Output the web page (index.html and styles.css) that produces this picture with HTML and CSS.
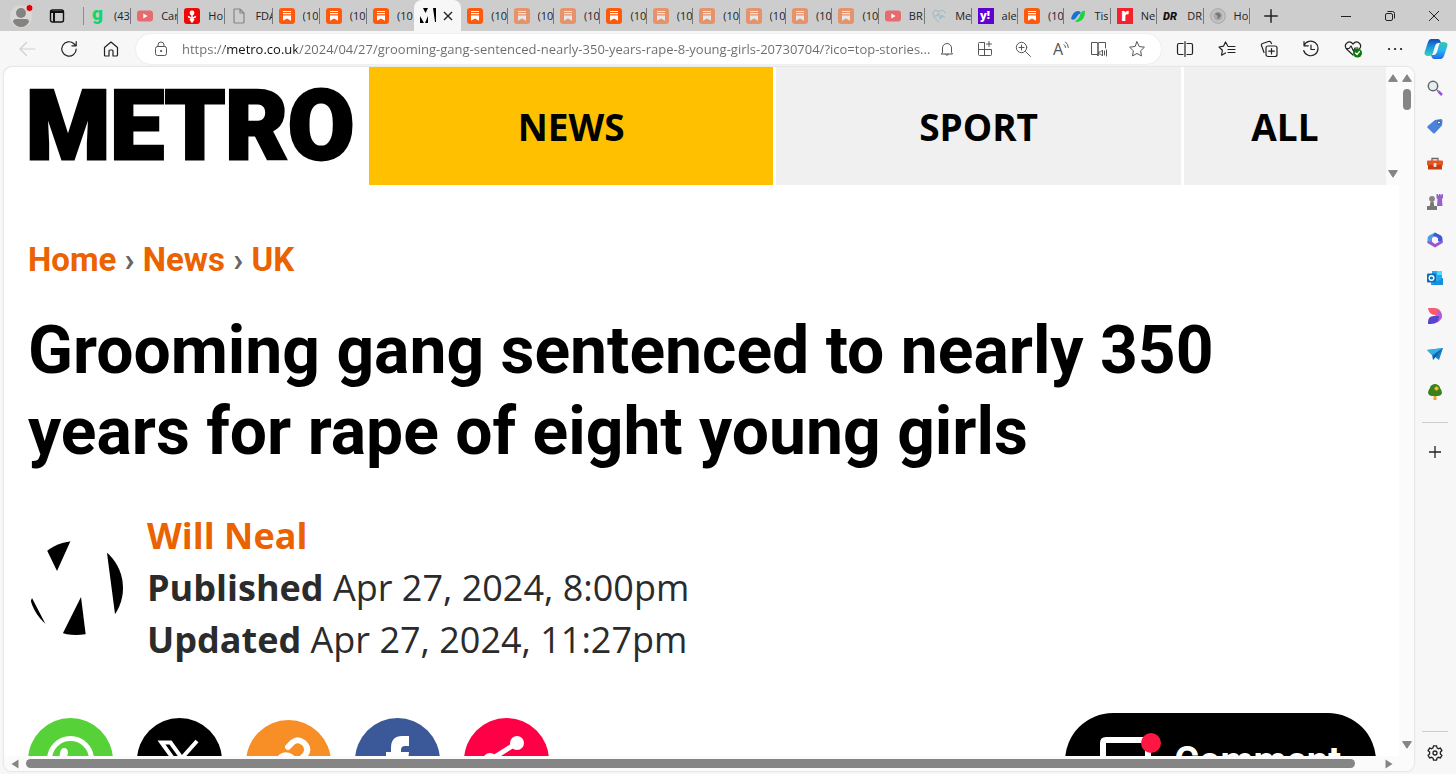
FILE: index.html
```html
<!DOCTYPE html>
<html lang="en">

<head>
  <meta charset="utf-8">
  <title>Grooming gang sentenced to nearly 350 years for rape of eight young girls</title>
  <link rel="stylesheet" href="styles.css">
</head>

<body>
  <!-- shared icons -->
  <svg class="defs" width="0" height="0">
    <symbol id="substack" viewBox="0 0 16 16">
      <rect width="16" height="16" rx="3" fill="#ff5a0c"/>
      <path d="M4 3.5h8M4 5.7h8" stroke="#fff" stroke-width="1.2"/>
      <path d="M4 7.4h8v5.4L8 10.6l-4 2.2z" fill="#fff"/>
    </symbol>
    <symbol id="youtube" viewBox="0 0 16 16">
      <rect y="2.5" width="16" height="11" rx="3" fill="#e56b6f"/>
      <path d="M6.3 5.4v5.2L10.6 8z" fill="#fff"/>
    </symbol>
    <symbol id="up" viewBox="0 0 10 8"><path d="M5 .8 9.4 7.4H.6z" fill="#858585" stroke="#858585" stroke-linejoin="round"/></symbol>
    <symbol id="down" viewBox="0 0 10 8"><path d="M5 7.2 9.4.6H.6z" fill="#858585" stroke="#858585" stroke-linejoin="round"/></symbol>
    <symbol id="plus" viewBox="0 0 16 16"><path d="M8 2v12M2 8h12" stroke="#222" stroke-width="1.3"/></symbol>
  </svg>

  <div class="browser">
    <div class="tabstrip">
      <button class="profile" aria-label="Profile">
        <svg width="26" height="24" viewBox="0 0 26 24">
          <circle cx="12" cy="12.5" r="11" fill="#dad8d6"/>
          <circle cx="12" cy="9" r="5" fill="#858381"/>
          <path d="M4 18q0-3 3-3h10q3 0 3 3-3 5-8 5t-8-5z" fill="#858381"/>
          <circle cx="20.5" cy="4" r="3.5" fill="#dc0000" stroke="#e4e4e4" stroke-width=".8"/>
        </svg>
      </button>
      <button class="tab-actions" aria-label="Tab actions">
        <svg width="16" height="16" viewBox="0 0 16 16" fill="none" stroke="#111" stroke-width="1.4">
          <rect x="1.5" y="2" width="13" height="12" rx="2"/>
          <path d="M1.5 4h13M5 5v9" stroke-width="2"/>
        </svg>
      </button>
      <div class="tabs" role="tablist">
        <button class="tab" role="tab"><svg viewBox="0 0 16 16"><text x="2" y="12" class="fav-g">g</text></svg><span>(43</span></button>
        <button class="tab" role="tab"><svg viewBox="0 0 16 16"><use href="#youtube"/></svg><span>Car</span></button>
        <button class="tab" role="tab"><svg viewBox="0 0 16 16"><rect width="16" height="16" rx="3" fill="#ee0808"/><circle cx="8" cy="5" r="2.4" fill="#fff"/><path d="M8 6v8M4 8.5l4 2 4-2M6 11l2 3 2-3" stroke="#fff" stroke-width="1.5" fill="none"/></svg><span>Ho</span></button>
        <button class="tab" role="tab"><svg viewBox="0 0 16 16" fill="none" stroke="#858585" stroke-width="1.2"><path d="M3 1h6l4 4v9q0 1-1 1H4q-1 0-1-1V2q0-1 1-1M9 1v4h4"/></svg><span>FDA</span></button>
        <button class="tab" role="tab"><svg viewBox="0 0 16 16"><use href="#substack"/></svg><span>(10</span></button>
        <button class="tab" role="tab"><svg viewBox="0 0 16 16"><use href="#substack"/></svg><span>(10</span></button>
        <button class="tab before-active" role="tab"><svg viewBox="0 0 16 16"><use href="#substack"/></svg><span>(10</span></button>
        <button class="tab active" role="tab" aria-selected="true" aria-label="Metro">
          <svg viewBox="0 0 16 16"><path d="M3 0h5L5.5 5zM0 8l4 7H0zM8 8v7H5zM13 0h3v14h-1z"/></svg>
          <svg viewBox="0 0 16 16" stroke="#222" stroke-width="1.4"><path d="M4 4l8 8M12 4l-8 8"/></svg>
        </button>
        <button class="tab" role="tab"><svg viewBox="0 0 16 16"><use href="#substack"/></svg><span>(10</span></button>
        <button class="tab asleep" role="tab"><svg viewBox="0 0 16 16"><use href="#substack"/></svg><span>(10</span></button>
        <button class="tab asleep" role="tab"><svg viewBox="0 0 16 16"><use href="#substack"/></svg><span>(10</span></button>
        <button class="tab" role="tab"><svg viewBox="0 0 16 16"><use href="#substack"/></svg><span>(10</span></button>
        <button class="tab asleep" role="tab"><svg viewBox="0 0 16 16"><use href="#substack"/></svg><span>(10</span></button>
        <button class="tab asleep" role="tab"><svg viewBox="0 0 16 16"><use href="#substack"/></svg><span>(10</span></button>
        <button class="tab asleep" role="tab"><svg viewBox="0 0 16 16"><use href="#substack"/></svg><span>(10</span></button>
        <button class="tab asleep" role="tab"><svg viewBox="0 0 16 16"><use href="#substack"/></svg><span>(10</span></button>
        <button class="tab asleep" role="tab"><svg viewBox="0 0 16 16"><use href="#substack"/></svg><span>(10</span></button>
        <button class="tab" role="tab"><svg viewBox="0 0 16 16"><use href="#youtube"/></svg><span>BR</span></button>
        <button class="tab" role="tab"><svg viewBox="0 0 16 16" fill="none" stroke="#8fb9c8"><path d="M8 14C4 11 2 8 2 5.500 2 2 6 1.500 8 4c2-2.500 6-2 6 1.500M3 8h3l1.500-3 2 6 1.500-4 1 2h2"/></svg><span>Me</span></button>
        <button class="tab" role="tab"><svg viewBox="0 0 16 16"><rect width="16" height="16" fill="#5f01d1"/><text x="2" y="11" class="fav-y">y!</text></svg><span>ale</span></button>
        <button class="tab" role="tab"><svg viewBox="0 0 16 16"><use href="#substack"/></svg><span>(10</span></button>
        <button class="tab" role="tab"><svg viewBox="0 0 16 16"><path d="M1 11Q3 3 8 3q2 0 3 2-3 1-5 5-2 3-5 1z" fill="#1673d2"/><path d="M5 13q4-2 5-6 2-5 5-4 0 8-5 10-3 2-5 0z" fill="#1ed33d"/></svg><span>Tis</span></button>
        <button class="tab" role="tab"><svg viewBox="0 0 16 16"><rect width="16" height="16" fill="#f5222d"/><text x="4" y="13" class="fav-r">r</text></svg><span>Ne</span></button>
        <button class="tab" role="tab"><svg viewBox="0 0 16 16"><text x="0" y="12" class="fav-dr">DR</text></svg><span>DR</span></button>
        <button class="tab" role="tab"><svg viewBox="0 0 16 16"><circle cx="8" cy="8" r="7.3" fill="#c4c4c4" stroke="#a4a4a4"/><circle cx="8" cy="8" r="4.5" fill="#aaa"/><path d="M5 6q4-3 6 1-1 4-4 4 2-3-2-5z" fill="#777"/></svg><span>Ho</span></button>
      </div>
      <button class="new-tab" aria-label="New tab"><svg width="18" height="18"><use href="#plus"/></svg></button>
      <div class="window-buttons">
        <button aria-label="Minimize"><svg width="12" height="12" viewBox="0 0 12 12" stroke="#222"><path d="M1 6.5h10"/></svg></button>
        <button aria-label="Restore"><svg width="12" height="12" viewBox="0 0 12 12" fill="none" stroke="#222"><rect x="1.5" y="3.5" width="7" height="7" rx="1.5"/><path d="M3.5 1.5h5q2 0 2 2v5"/></svg></button>
        <button aria-label="Close"><svg width="12" height="12" viewBox="0 0 12 12" stroke="#222"><path d="M1 1l10 10M11 1L1 11"/></svg></button>
      </div>
    </div>

    <div class="toolbar">
      <button class="tool disabled" aria-label="Back"><svg viewBox="0 0 18 18"><path d="M17 9H2M8.500 2.500L2 9l6.500 6.500"/></svg></button>
      <button class="tool" aria-label="Refresh"><svg viewBox="0 0 18 18"><path d="M16.200 9a7.200 7.200 0 1 1-2.300-5.300L16 5.600M16.200 1.500v4.300h-4.300"/></svg></button>
      <button class="tool" aria-label="Home"><svg viewBox="0 0 18 18"><path d="M2.500 7.500L9 2l6.500 5.500V15q0 1-1 1H11v-5q0-1-1-1H8q-1 0-1 1v5H3.500q-1 0-1-1z"/></svg></button>
      <div class="address">
        <svg class="lock" viewBox="0 0 18 18"><rect x="3.5" y="6.5" width="11" height="9" rx="2"/><path d="M6 6.500V5a3 3 0 0 1 6 0v1.500"/><circle cx="9" cy="11" r=".6" fill="#555"/></svg>
        <input class="url" type="text" aria-label="Address" value="https://metro.co.uk/2024/04/27/grooming-gang-sentenced-nearly-350-years-rape-8-young-girls-20730704/?ico=top-stories...">
        <button class="tool bell" aria-label="Notifications"><svg viewBox="0 0 18 18"><path d="M4.500 12.500V8a4.500 4.500 0 0 1 9 0v4.500l1 1.500h-11zM7.500 14.500q1.500 2 3 0"/></svg></button>
        <button class="tool" aria-label="Apps"><svg viewBox="0 0 18 18"><path d="M8 2.500H3.500q-1 0-1 1v11q0 1 1 1h11q1 0 1-1v-5h-13M8.500 2.500v13M13 1.500v5M10.500 4h5"/></svg></button>
        <button class="tool" aria-label="Zoom"><svg viewBox="0 0 18 18"><circle cx="7.5" cy="7.5" r="5.2"/><path d="M11.500 11.500l5 5M7.500 5v5M5 7.500h5"/></svg></button>
        <button class="tool" aria-label="Read aloud"><svg viewBox="0 0 18 18"><text x="1" y="15" class="read-a">A</text><path d="M12 4.500q1.500 1 1.500 3M13.500 2q2.800 2 2.800 5.500"/></svg></button>
        <button class="tool" aria-label="Immersive reader"><svg viewBox="0 0 18 18"><path d="M8 3.500q0-1-1-1H1.500v12H7q1 0 1 1zM8 3.500q0-1 1-1h6.500V8M8 15.500v-12M9 12h1.500l2-2v6l-2-2H9zM14.500 11v4M16.500 10v6"/></svg></button>
        <button class="tool" aria-label="Add to favorites"><svg viewBox="0 0 18 18"><path d="M9 1.800l2.200 4.700 5.200.7-3.800 3.600.9 5.100L9 13.500l-4.500 2.400.9-5.100L1.600 7.200l5.200-.7z"/></svg></button>
      </div>
      <button class="tool" aria-label="Split screen"><svg viewBox="0 0 18 18"><path d="M7 3.500H3q-1.500 0-1.500 1.500v8q0 1.500 1.500 1.500h4M11 3.500h4q1.500 0 1.500 1.500v8q0 1.500-1.500 1.500h-4M9 1.500v15"/></svg></button>
      <button class="tool" aria-label="Favorites"><svg viewBox="0 0 18 18"><path d="M9.500 5.500L7.500 2 5.500 6.200 1 7l3.400 3.200-.8 5 3.900-2.200M10 6.500h7M10 9.500h7M10 12.500h7"/></svg></button>
      <button class="tool" aria-label="Collections"><svg viewBox="0 0 18 18"><rect x="6" y="6" width="11" height="10.5" rx="2"/><path d="M11.500 8.500v5.500M8.700 11.200h5.600M4 12.500L1.500 5.500Q1 4 2.500 3.500l6-2q2-.5 2.500 1l.5 1"/></svg></button>
      <button class="tool" aria-label="History"><svg viewBox="0 0 18 18"><path d="M2 5.500a7.300 7.300 0 1 1-.3 5M2 1.500v4.300h4.300M9 5v4.500h3.500"/></svg></button>
      <button class="tool" aria-label="Browser essentials"><svg viewBox="0 0 18 18"><path d="M9 15L2.500 9C-1 4 5-.5 9 4c4-4.500 10 0 6.500 5M2 8.500h3L7 6l2.500 5L11 8h3"/><circle cx="13.5" cy="13" r="4.5" fill="#0b7a0b" stroke="none"/><path d="M11.500 13l1.500 1.500 2.500-3" stroke="#fff"/></svg></button>
      <button class="tool" aria-label="Settings and more"><svg viewBox="0 0 18 18"><path d="M3 9h.1M9 9h.1M15 9h.1" stroke-width="2.2"/></svg></button>
      <button class="copilot" aria-label="Copilot">
        <svg width="24" height="22" viewBox="0 0 24 22">
          <defs>
            <linearGradient id="cop1" x1="0" y1="0" x2="0" y2="1"><stop offset="0" stop-color="#1746bd"/><stop offset=".5" stop-color="#179de0"/><stop offset="1" stop-color="#3ed1b0"/></linearGradient>
            <linearGradient id="cop2" x1="0" y1="0" x2="0" y2="1"><stop offset="0" stop-color="#35c9a0"/><stop offset=".5" stop-color="#28b4ef"/><stop offset="1" stop-color="#1f6be8"/></linearGradient>
          </defs>
          <path d="M7 1h7q2 0 3 4h-3q-2 0-3 3L9 15q-1 3-4 3-6 0-4-5L4 4q1-3 3-3z" fill="url(#cop1)"/>
          <path d="M17 21h-7q-2 0-3-4h3q2 0 3-3l2-7q1-3 4-3 6 0 4 5l-3 9q-1 3-3 3z" fill="url(#cop2)"/>
        </svg>
      </button>
    </div>

    <div class="workspace">
      <div class="frame">
        <div class="page">
          <header class="masthead">
            <a class="logo" href="#">METRO</a>
            <nav class="nav">
              <a class="nav-item current" href="#">NEWS</a>
              <a class="nav-item" href="#">SPORT</a>
              <a class="nav-item" href="#">ALL</a>
            </nav>
            <div class="scroll-y">
              <svg width="10" height="8"><use href="#up"/></svg>
              <svg width="10" height="8"><use href="#down"/></svg>
            </div>
          </header>

          <main class="article">
            <div class="breadcrumb"><a href="#">Home</a> › <a href="#">News</a> › <a href="#">UK</a></div>
            <h1 class="headline">Grooming gang sentenced to nearly 350 years for rape of eight young girls</h1>
            <div class="byline">
              <svg class="avatar" viewBox="28 540 96 96">
                <clipPath id="round"><circle cx="76" cy="588" r="47"/></clipPath>
                <path clip-path="url(#round)" d="M42 540h29L57 571zM107 553l20-3v64h-12zM32 598L46 625l-18 5v-22zM81 597l5 40H61z"/>
              </svg>
              <div class="byline-text">
                <a class="author" href="#">Will Neal</a>
                <div><b>Published</b> Apr 27, 2024, 8:00pm</div>
                <div><b>Updated</b> Apr 27, 2024, 11:27pm</div>
              </div>
            </div>
            <div class="share">
              <button class="share-button whatsapp" aria-label="WhatsApp"><svg viewBox="0 0 85 85"><circle cx="42.5" cy="41.5" r="21" fill="none" stroke="#fff" stroke-width="5"/><path d="M36 30q4 0 4 5l-1 4q3 7 10 9 8 2 5 6-6 5-15-3T32 35q1-5 4-5z" fill="#fff"/></svg></button>
              <button class="share-button twitter" aria-label="X"><svg viewBox="0 0 85 85"><path d="M24.500 24.500l26 36h9l-26-36zM60 23L44 41M38 47L24 62" fill="none" stroke="#fff" stroke-width="4"/></svg></button>
              <button class="share-button copy" aria-label="Copy link"><svg viewBox="0 0 85 85" fill="none" stroke="#fff" stroke-width="6" stroke-linecap="round"><path d="M42 27l5-5q5-4 11 1 6 6 1 12l-9 9q-6 5-11-1M45 37q-6-4-11 1l-9 9q-5 6 0 11 6 5 12 0l5-5"/></svg></button>
              <button class="share-button facebook" aria-label="Facebook"><svg viewBox="0 0 85 85"><path d="M54 18v10h-4q-4 0-4 4v2h8l-1 9h-7v25H36V43h-5v-9h5v-4q0-12 11-12z" fill="#fff"/></svg></button>
              <button class="share-button more" aria-label="Share"><svg viewBox="0 0 85 85"><path d="M53 25L26 42l27 17" fill="none" stroke="#fff" stroke-width="5"/><g fill="#fff"><circle cx="53" cy="25" r="7"/><circle cx="26" cy="42" r="7"/><circle cx="53" cy="59" r="7"/></g></svg></button>
              <button class="comment">
                <svg width="62" height="58" viewBox="0 0 62 58"><path d="M6 8h39q3 0 3 3v27q0 3-3 3H22L11 52V41H6q-3 0-3-3V11q0-3 3-3z" fill="none" stroke="#fff" stroke-width="6"/><circle cx="51" cy="11" r="10" fill="#ff1744"/></svg>
                Comment
              </button>
            </div>
          </main>
        </div>
        <div class="scroll-y">
          <svg width="10" height="8"><use href="#up"/></svg>
          <div class="thumb"></div>
          <svg width="10" height="8"><use href="#down"/></svg>
        </div>
        <div class="scroll-x">
          <svg width="8" height="10" viewBox="0 0 8 10" fill="#858585"><path d="M.5 5L7.500.5v9z"/></svg>
          <div class="thumb"></div>
          <svg width="8" height="10" viewBox="0 0 8 10" fill="#858585"><path d="M7.500 5L.5.500v9z"/></svg>
        </div>
      </div>

      <aside class="sidebar">
        <button aria-label="Search"><svg viewBox="0 0 16 16"><circle cx="6" cy="6" r="4.7" fill="#e6eef4" stroke="#666" stroke-width="1.5"/><path d="M10 10l1.500 1.500" stroke="#666" stroke-width="1.5"/><path d="M11.500 11.500L15 15" stroke="#9355d8" stroke-width="2.5"/></svg></button>
        <button aria-label="Shopping"><svg viewBox="0 0 16 16"><path d="M8 2l6-1q1.500 0 1.500 2L15 7.500 8 15q-1 1-2 0L.8 10q-1-1 0-2z" fill="#4b82dc"/><circle cx="12" cy="4.5" r="1.5" fill="#fff" stroke="#224b98"/></svg></button>
        <button aria-label="Tools"><svg viewBox="0 0 16 16"><path d="M5 5V2.500h6V5" fill="none" stroke="#676767" stroke-width="1.3"/><rect y="4.5" width="16" height="5" rx="1" fill="#e65220"/><path d="M1 9h14v4.500H1z" fill="#c93c10"/><rect x="6.5" y="7" width="3" height="4" rx="1" fill="#d9e2e6"/></svg></button>
        <button aria-label="Games"><svg viewBox="0 0 16 16"><path d="M9.500 0H11v1.300h1V0h1.500v1.300h1V0H16v4l-1 1 .5 7H10l.5-7-1-1z" fill="#9561cd"/><circle cx="5" cy="4.8" r="2.9" fill="#858585"/><path d="M3.500 7.500h3l.7 4.500H10v4H0v-4h2.800z" fill="#777"/></svg></button>
        <button aria-label="Microsoft 365"><svg viewBox="0 0 16 16"><path d="M8 .500L2 3.500Q.5 4.500.5 7v4L5 10V6l5-3z" fill="#4e9de5"/><path d="M8 .500l6 3q1.500 1 1.500 3.500v4L11 9V6L6 3.500z" fill="#4358ce"/><path d="M.5 9.500V11L8 15.500l7.500-4.500V8L8 12 4.500 9.500z" fill="#9a55cf"/></svg></button>
        <button aria-label="Outlook"><svg viewBox="0 0 16 16"><path d="M5 1h10v7h1v7H4V8h1z" fill="#28a8ea"/><path d="M10 1h5v4h-5z" fill="#50d9ff"/><path d="M4 15l12-7v7z" fill="#1490df"/><rect y="3.5" width="9" height="9" rx="1" fill="#0f6cbd"/><circle cx="4.5" cy="8" r="2.3" fill="none" stroke="#fff" stroke-width="1.4"/></svg></button>
        <button aria-label="Designer"><svg viewBox="0 0 16 16"><path d="M1 0h6q5 0 7 4 3 7-5 11 2-5-1-8Q2 7 1 0z" fill="#f65b72"/><path d="M10 2q5 2 5 6t-6 7q4-6 1-13z" fill="#b35be3"/><path d="M1 14q0-6 6-6h5q0 8-8 8H1z" fill="#5646cb"/></svg></button>
        <button aria-label="Drop"><svg viewBox="0 0 16 16"><path d="M0 4l16-2-4 12-4-3-2 3-1-5z" fill="#1682c5"/><path d="M0 4l16-2L5 9z" fill="#36aee9"/><path d="M16 2L6 14v-4z" fill="#125d9f"/></svg></button>
        <button aria-label="Tree"><svg viewBox="0 0 16 16"><path d="M6.500 10h3v6h-3z" fill="#f2a32b"/><path d="M5 1q3-2 6 0 2 1 2 3 2 2 2 5-1 3-4 3H5q-3 0-4-3 0-3 2-5 0-2 2-3z" fill="#37811f"/><path d="M9.500 2.500v4M7.500 4.500h4" stroke="#ffc21f" stroke-width="2"/></svg></button>
        <hr>
        <button aria-label="Customize"><svg viewBox="0 0 16 16"><use href="#plus"/></svg></button>
        <hr class="bottom-rule">
        <button aria-label="Settings"><svg viewBox="0 0 16 16" fill="none" stroke="#222" stroke-width="1.3"><path d="M6.500.800h3l.5 2.100 1.400.8 2-.6 1.500 2.500L13.400 7v2l1.500 1.400-1.500 2.500-2-.6-1.400.8-.5 2.100h-3L6 13.100l-1.400-.8-2 .6-1.500-2.500L2.600 9V7L1.100 5.600l1.500-2.500 2 .6L6 2.900z"/><circle cx="8" cy="8" r="2"/></svg></button>
      </aside>
    </div>
  </div>
</body>

</html>
```
FILE: styles.css
```css
* {
  box-sizing: border-box;
}

body {
  margin: 0;
  font-family: "Open Sans", "Noto Sans", sans-serif;
  color: #2b2b2b;
  background: #f7f7f7;
}

button {
  display: flex;
  align-items: center;
  justify-content: center;
  flex-shrink: 0;
  margin: 0;
  padding: 0;
  border: 0;
  background: none;
  font-family: inherit;
}

a {
  text-decoration: none;
}

.defs {
  position: absolute;
}

.browser {
  display: flex;
  flex-direction: column;
  height: 100vh;
  overflow: hidden;
}

/* tabs */
.tabstrip {
  display: flex;
  height: 31px;
  background: #cdcdcd;
}

.profile {
  width: 44px;
}

.tab-actions {
  width: 26px;
}

.tabs {
  display: grid;
  grid-template-columns: repeat(8, 189fr) repeat(17, 186fr);
  flex: 1;
  margin-left: 13px;
  border-left: 1px solid #8c8c8c;
  border-image: linear-gradient(transparent 8px, #8c8c8c 8px, #8c8c8c 24px, transparent 24px) 1;
}

.tab {
  position: relative;
  justify-content: flex-start;
  gap: 8px;
  min-width: 0;
  padding: 0 0 0 6px;
  overflow: hidden;
  font-size: 11px;
  color: #222;
  white-space: nowrap;
}

.tab svg {
  flex: none;
  width: 16px;
  height: 16px;
}

.tab span {
  overflow: hidden;
}

.tab::after {
  content: "";
  position: absolute;
  right: 0;
  top: 8px;
  width: 1px;
  height: 16px;
  background: #777;
}

.tab.asleep svg {
  opacity: 0.5;
}

.tab.active {
  gap: 4px;
  background: #f7f7f7;
  border-radius: 8px 8px 0 0;
}

.tab.active::after,
.tab.before-active::after {
  display: none;
}

.fav-g {
  font: 900 19px Roboto, sans-serif;
  fill: #10d76b;
}

.fav-y {
  font: 800 11px "Open Sans", sans-serif;
  fill: #fff;
}

.fav-r {
  font: 800 17px "Open Sans", sans-serif;
  fill: #fff;
}

.fav-dr {
  font: italic 900 11px Roboto, sans-serif;
  fill: #111;
}

.new-tab {
  width: 42px;
}

.window-buttons {
  display: flex;
  margin-left: 32px;
}

.window-buttons button {
  width: 44px;
}

/* toolbar */
.toolbar {
  display: flex;
  align-items: center;
  height: 36px;
  padding-left: 6px;
}

.tool {
  width: 42px;
  height: 30px;
}

.tool svg,
.lock {
  width: 18px;
  height: 18px;
  fill: none;
  stroke: #222;
  stroke-width: 1.2;
  stroke-linecap: round;
  stroke-linejoin: round;
}

.tool.disabled svg {
  stroke: #cfcfcf;
}

.address {
  display: flex;
  align-items: center;
  flex: 1;
  height: 30px;
  min-width: 0;
  margin: 0 3px 0 4px;
  padding: 0 5px 0 16px;
  border-radius: 15px;
  background: #fff;
  box-shadow: 0 0 2px #ddd;
}

.address .tool {
  width: 38px;
}

.address .bell {
  width: 30px;
  margin-right: 4px;
}

.address .tool svg,
.lock {
  flex: none;
  stroke: #555;
  stroke-width: 1;
}

.url {
  flex: 1;
  min-width: 0;
  margin-left: 12px;
  padding: 0;
  border: 0;
  outline: 0;
  font: 13px "Open Sans", sans-serif;
  /* host name is darker than the rest of the address */
  color: transparent;
  background: linear-gradient(90deg, #6b6b6b 43px, #111 43px, #111 115px, #6b6b6b 115px);
  -webkit-background-clip: text;
  background-clip: text;
}

.read-a {
  font: 16px "Open Sans", sans-serif;
  fill: #555;
  stroke: none;
}

.copilot {
  width: 40px;
}

/* page frame */
.workspace {
  display: flex;
  flex: 1;
  min-height: 0;
}

.frame {
  display: grid;
  grid-template-columns: 1fr 15px;
  grid-template-rows: 1fr 15px;
  flex: 1;
  min-width: 0;
  margin: 0 0 3px 4px;
  overflow: hidden;
  border-radius: 8px;
  background: #fff;
  box-shadow: 0 0 2px #bbb;
}

.page {
  min-width: 0;
  min-height: 0;
  overflow: hidden;
}

.scroll-y {
  display: flex;
  flex-direction: column;
  align-items: center;
  padding: 7px 0;
  background: #fbfbfb;
}

.scroll-y svg:last-child {
  margin-top: auto;
}

.scroll-y .thumb {
  width: 8px;
  height: 21px;
  margin-top: 7px;
  border-radius: 4px;
  background: #858585;
}

.scroll-x {
  display: flex;
  grid-column: 1 / 3;
  align-items: center;
  gap: 7px;
  padding: 0 21px 0 7px;
  background: #fbfbfb;
}

.scroll-x .thumb {
  flex: 1;
  height: 9px;
  margin-right: 23px;
  border-radius: 5px;
  background: #858585;
}

/* masthead */
.masthead {
  display: flex;
  height: 118px;
}

.logo {
  width: 365px;
  padding-left: 22px;
  font: 900 96px/118px Roboto, sans-serif;
  color: #000;
  -webkit-text-stroke: 3px #000;
}

.nav {
  display: grid;
  grid-template-columns: 2fr 2fr 1fr;
  flex: 1;
  gap: 3px;
}

.nav-item {
  display: flex;
  align-items: center;
  justify-content: center;
  padding-top: 1px;
  background: #f0f0f0;
  font-size: 37px;
  font-weight: 700;
  color: #000;
}

.nav-item.current {
  background: #ffc000;
}

.masthead .scroll-y {
  width: 13px;
}

/* article */
.article {
  padding: 55px 23px 0 24px;
}

.breadcrumb {
  font: 700 33px/40px Roboto, sans-serif;
  color: #666;
}

.breadcrumb a,
.author {
  color: #eb6200;
}

.headline {
  max-width: 1280px;
  margin: 30px 0 38px;
  font: 700 66px/81px Roboto, sans-serif;
  color: #000;
}

.byline {
  display: flex;
  align-items: center;
  gap: 23px;
}

.avatar {
  width: 96px;
  height: 96px;
}

.byline-text {
  font-size: 36px;
  line-height: 52px;
}

.author {
  font-weight: 700;
}

.share {
  display: flex;
  align-items: flex-start;
  gap: 24px;
  margin-top: 47px;
}

.share-button {
  width: 85px;
  height: 85px;
  margin-top: 5px;
  border-radius: 50%;
}

.share-button svg {
  width: 85px;
  height: 85px;
}

.whatsapp {
  background: #57d138;
}

.twitter {
  background: #000;
}

.copy {
  margin-top: 7px;
  background: #f88e26;
}

.facebook {
  background: #3b5998;
}

.more {
  background: #ff0046;
}

.comment {
  gap: 12px;
  height: 96px;
  margin-left: auto;
  padding: 0 35px;
  border-radius: 48px;
  background: #000;
  font: 700 38px Roboto, sans-serif;
  color: #fff;
}

/* sidebar */
.sidebar {
  display: flex;
  flex-direction: column;
  align-items: center;
  width: 42px;
  padding: 2px 0;
}

.sidebar button {
  width: 42px;
  height: 38px;
}

.sidebar svg {
  width: 16px;
  height: 16px;
}

.sidebar hr {
  width: 26px;
  margin: 11px 0 10px;
  border: 0;
  border-top: 1px solid #ccc;
}

.sidebar .bottom-rule {
  margin: auto 0 2px;
}
```
